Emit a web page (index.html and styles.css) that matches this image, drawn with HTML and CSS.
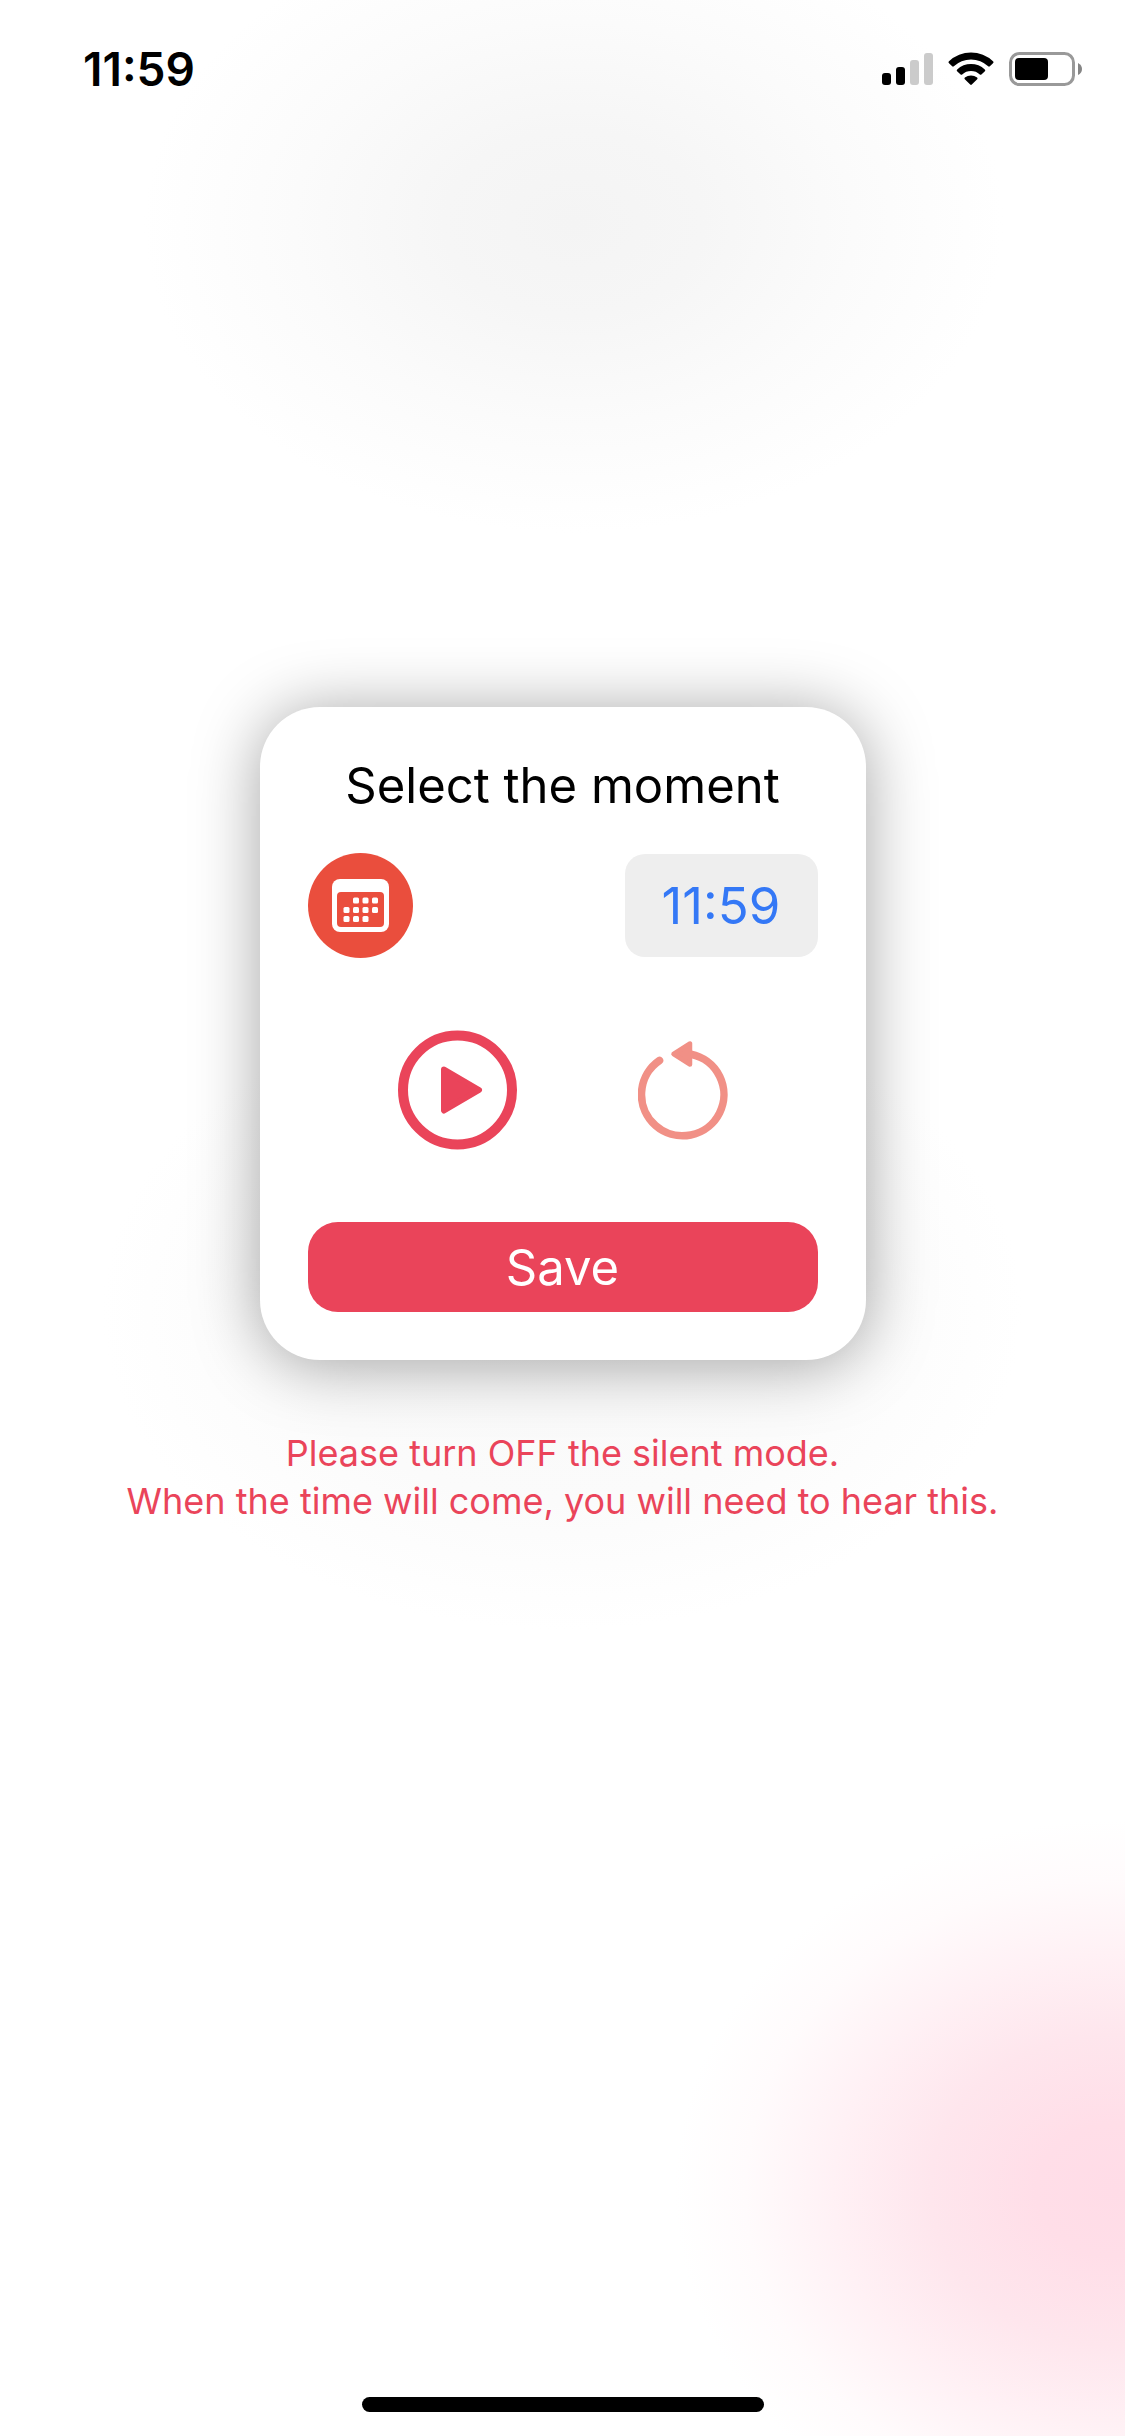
FILE: index.html
```html
<!DOCTYPE html>
<html lang="en">
<head>
  <meta charset="utf-8">
  <meta name="viewport" content="width=device-width, initial-scale=1">
  <title>Select the moment</title>
  <link rel="stylesheet" href="styles.css">
</head>
<body>
  <div class="screen">
    <header class="status-bar">
      <span class="status-time">11:59</span>
      <div class="status-icons">
        <svg class="icon-signal" width="51" height="34" viewBox="0 0 51 34" aria-label="Signal">
          <rect x="0" y="21" width="9" height="12" rx="3"/>
          <rect x="14" y="15" width="9" height="18" rx="3"/>
          <rect x="28" y="8" width="9" height="25" rx="3" fill="#cbcbcb"/>
          <rect x="42" y="1" width="9" height="32" rx="3" fill="#cbcbcb"/>
        </svg>
        <svg class="icon-wifi" width="46" height="34" viewBox="0 0 46 34" aria-label="Wi-Fi">
          <path d="M1 9.200A32 32 0 0 1 45 9.200Q46 10.200 45 11.200L41.800 14.300Q41 15 40.200 14.300A25 25 0 0 0 5.800 14.300Q5 15 4.200 14.300L1 11.200Q0 10.200 1 9.200Z"/>
          <path d="M9.200 17.400A20 20 0 0 1 36.800 17.400Q37.800 18.300 36.900 19.200L33.400 22.500Q32.600 23.200 31.800 22.500A13 13 0 0 0 14.200 22.500Q13.400 23.200 12.600 22.500L9.100 19.200Q8.200 18.300 9.200 17.400Z"/>
          <path d="M16.900 25.600A9.500 9.500 0 0 1 29.100 25.600Q30.100 26.400 29.200 27.300L23.800 32.600Q23 33.400 22.200 32.600L16.800 27.300Q15.900 26.400 16.900 25.600Z"/>
        </svg>
        <svg class="icon-battery" width="73" height="34" viewBox="0 0 73 34" aria-label="Battery">
          <rect x="1.500" y="1.500" width="63" height="31" rx="9" fill="none" stroke="#999" stroke-width="3"/>
          <rect x="6" y="6" width="33" height="22" rx="4"/>
          <path d="M69 11Q73 13 73 17T69 23Z" fill="#858585"/>
        </svg>
      </div>
    </header>

    <main class="content">
      <section class="card">
        <h1 class="card-title">Select the moment</h1>
        <div class="picker-row">
          <button class="icon-button" type="button" aria-label="Choose date">
            <svg width="105" height="105" viewBox="0 0 105 105">
              <circle cx="52.500" cy="52.500" r="52.500" fill="#ea4e3d"/>
              <rect x="24" y="26" width="57" height="53" rx="8" fill="#fff"/>
              <rect x="29" y="39" width="47" height="35" rx="4" fill="#ea4e3d"/>
              <g fill="#fff">
                <rect x="45" y="44.500" width="6" height="6" rx="1.500"/>
                <rect x="54.500" y="44.500" width="6" height="6" rx="1.500"/>
                <rect x="64" y="44.500" width="6" height="6" rx="1.500"/>
                <rect x="35.500" y="54" width="6" height="6" rx="1.500"/>
                <rect x="45" y="54" width="6" height="6" rx="1.500"/>
                <rect x="54.500" y="54" width="6" height="6" rx="1.500"/>
                <rect x="64" y="54" width="6" height="6" rx="1.500"/>
                <rect x="35.500" y="63" width="6" height="6" rx="1.500"/>
                <rect x="45" y="63" width="6" height="6" rx="1.500"/>
                <rect x="54.500" y="63" width="6" height="6" rx="1.500"/>
              </g>
            </svg>
          </button>
          <button class="time-button" type="button">11:59</button>
        </div>
        <div class="player-row">
          <button class="icon-button" type="button" aria-label="Play">
            <svg width="120" height="120" viewBox="0 0 120 120">
              <circle cx="59.500" cy="60" r="54.500" fill="none" stroke="#ea445a" stroke-width="10"/>
              <path d="M46 39.500L81 60L46 80.500Z" fill="#ea445a" stroke="#ea445a" stroke-width="6" stroke-linejoin="round"/>
            </svg>
          </button>
          <button class="icon-button" type="button" aria-label="Reset">
            <svg width="90" height="100" viewBox="0 0 90 100">
              <path d="M21.500 20.500A41.200 41.200 0 1 0 53 14.200" fill="none" stroke="#f19086" stroke-width="7.600" stroke-linecap="round"/>
              <path d="M35.500 14L52 3.500V24.500Z" fill="#f19086" stroke="#f19086" stroke-width="4.500" stroke-linejoin="round"/>
            </svg>
          </button>
        </div>
        <button class="save-button" type="button">Save</button>
      </section>
      <p class="notice">Please turn OFF the silent mode.<br>When the time will come, you will need to hear this.</p>
    </main>

    <footer class="home-area"><div class="home-indicator"></div></footer>
  </div>
</body>
</html>
```
FILE: styles.css
```css
* {
  box-sizing: border-box;
}

body {
  margin: 0;
  font-family: Inter, "Liberation Sans", sans-serif;
  color: #000;
  background: #fff;
}

.screen {
  display: flex;
  flex-direction: column;
  min-height: 100vh;
  background:
    radial-gradient(440px 370px at 1115px 2190px, #ffdce7 0%, #ffdee8 18%, #fee6ed 42%, #fff1f5 64%, #fffbfc 84%, rgba(255, 255, 255, 0) 100%),
    radial-gradient(430px 310px at 51% 223px, #f4f4f4 0%, #f6f6f6 30%, #fbfbfb 65%, rgba(255, 255, 255, 0) 100%),
    radial-gradient(460px 320px at 50% 1310px, #f9f9f9 0%, #fbfbfb 60%, rgba(255, 255, 255, 0) 100%),
    #fff;
}

.status-bar {
  display: flex;
  align-items: center;
  justify-content: space-between;
  height: 138px;
  padding: 0 43px 0 83px;
}

.status-time {
  font-size: 46px;
  font-weight: 600;
}

.status-icons {
  display: flex;
  gap: 15px;
}

.content {
  display: flex;
  flex: 1;
  flex-direction: column;
  align-items: center;
  padding-top: 569px;
}

.card {
  display: flex;
  flex-direction: column;
  width: 606px;
  max-width: 100%;
  padding: 48px;
  border-radius: 60px;
  background: #fff;
  box-shadow: 0 4px 66px rgba(0, 0, 0, 0.36);
}

.card-title {
  margin: 0 0 36px;
  font-size: 49px;
  font-weight: 400;
  line-height: 62px;
  text-align: center;
}

button {
  padding: 0;
  border: 0;
  background: none;
  font: inherit;
  font-size: 49px;
}

.icon-button svg,
.status-icons svg {
  display: block;
}

.picker-row {
  display: flex;
  align-items: center;
  justify-content: space-between;
}

.time-button {
  width: 193px;
  height: 103px;
  border-radius: 20px;
  background: #eee;
  color: #3478f6;
  font-size: 51px;
}

.player-row {
  display: flex;
  align-items: center;
  justify-content: center;
  gap: 120px;
  margin: 72px 0;
}

.save-button {
  height: 90px;
  border-radius: 30px;
  background: #ea445a;
  color: #fff;
}

.notice {
  margin: 69px 0 0;
  color: #ea445a;
  font-size: 36px;
  line-height: 48px;
  text-align: center;
}

.home-area {
  display: flex;
  justify-content: center;
  padding-bottom: 24px;
}

.home-indicator {
  width: 402px;
  height: 15px;
  border-radius: 8px;
  background: #000;
}
```
